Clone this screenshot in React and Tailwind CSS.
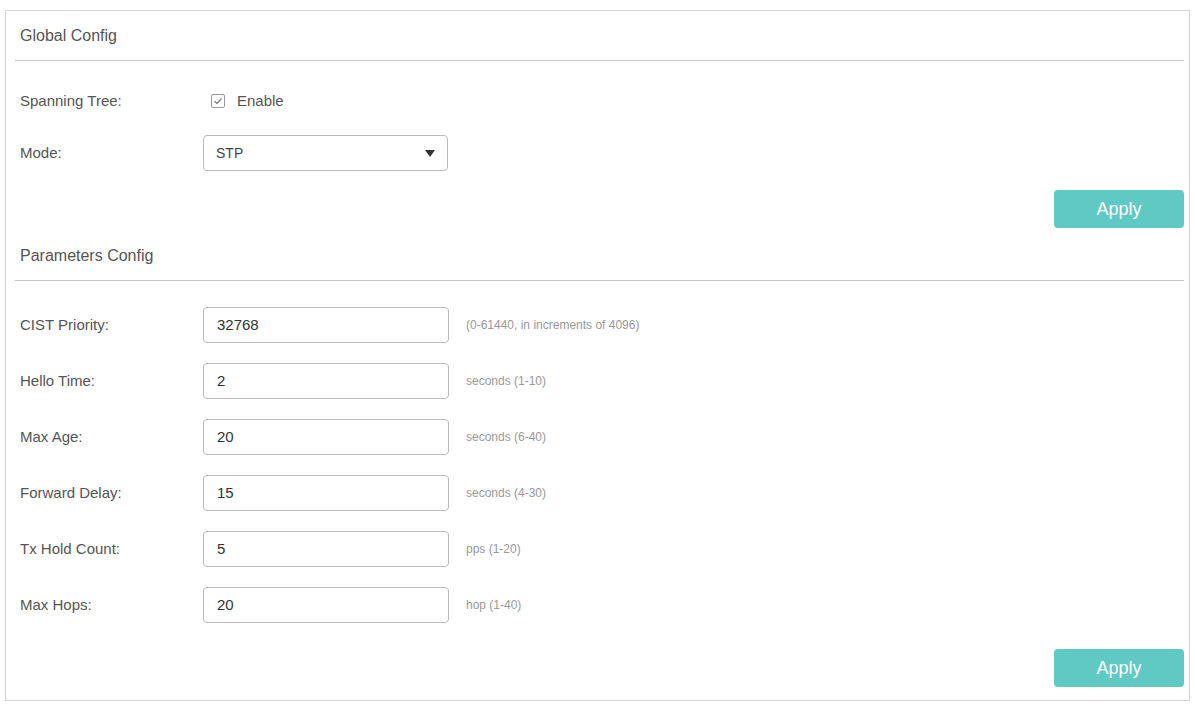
import React from "react";

const params = [
  { label: "CIST Priority:", value: "32768", hint: "(0-61440, in increments of 4096)" },
  { label: "Hello Time:", value: "2", hint: "seconds (1-10)" },
  { label: "Max Age:", value: "20", hint: "seconds (6-40)" },
  { label: "Forward Delay:", value: "15", hint: "seconds (4-30)" },
  { label: "Tx Hold Count:", value: "5", hint: "pps (1-20)" },
  { label: "Max Hops:", value: "20", hint: "hop (1-40)" },
];

function Header({ children }) {
  return (
    <div className="h-[50px] flex items-center border-b border-[#c8c8c8] pl-[5px] text-[16px] text-[#555]">
      {children}
    </div>
  );
}

function ApplyButton() {
  return (
    <div className="flex justify-end">
      <button className="w-[130px] h-[38px] rounded-[4px] bg-[#5fc9c4] text-white text-[18px]">Apply</button>
    </div>
  );
}

export default function App() {
  return (
    <div className="bg-white w-[1195px] h-[704px] pt-[10px] pl-[5px]" style={{ fontFamily: "Arial, 'Liberation Sans', sans-serif" }}>
      <div className="w-[1185px] h-[691px] border border-[#d4d4d4] pl-[9px] pr-[5px]">
        <Header>Global Config</Header>
        <div className="flex items-center h-[36px] mt-[22px] text-[15px] text-[#555]">
          <span className="w-[196px] pl-[5px]">Spanning Tree:</span>
          <span className="w-[14px] h-[14px] border border-[#999] rounded-[2px] flex items-center justify-center">
            <svg width="10" height="10" viewBox="0 0 10 10"><path d="M1.5 5.2 L4 7.5 L8.5 2.5" stroke="#777" strokeWidth="1.2" fill="none" /></svg>
          </span>
          <span className="ml-[12px]">Enable</span>
        </div>
        <div className="flex items-center h-[36px] mt-[16px] text-[15px] text-[#555]">
          <span className="w-[188px] pl-[5px]">Mode:</span>
          <div className="w-[245px] h-[36px] border border-[#bbb] rounded-[4px] flex items-center justify-between px-[12px] text-[14px] text-[#444]">
            <span>STP</span>
            <svg width="10" height="7" viewBox="0 0 10 7"><path d="M0 0 L10 0 L5 7 Z" fill="#333" /></svg>
          </div>
        </div>
        <div className="mt-[19px]"><ApplyButton /></div>
        <div className="mt-[3px]"><Header>Parameters Config</Header></div>
        <div className="flex flex-col gap-[20px] mt-[26px]">
          {params.map((p) => (
            <div key={p.label} className="flex items-center h-[36px] text-[15px] text-[#555]">
              <span className="w-[188px] pl-[5px]">{p.label}</span>
              <div className="w-[246px] h-[36px] border border-[#bbb] rounded-[4px] flex items-center px-[13px] text-[15px] text-[#333]">{p.value}</div>
              <span className="ml-[17px] text-[12px] text-[#999]">{p.hint}</span>
            </div>
          ))}
        </div>
        <div className="mt-[26px]"><ApplyButton /></div>
      </div>
    </div>
  );
}
